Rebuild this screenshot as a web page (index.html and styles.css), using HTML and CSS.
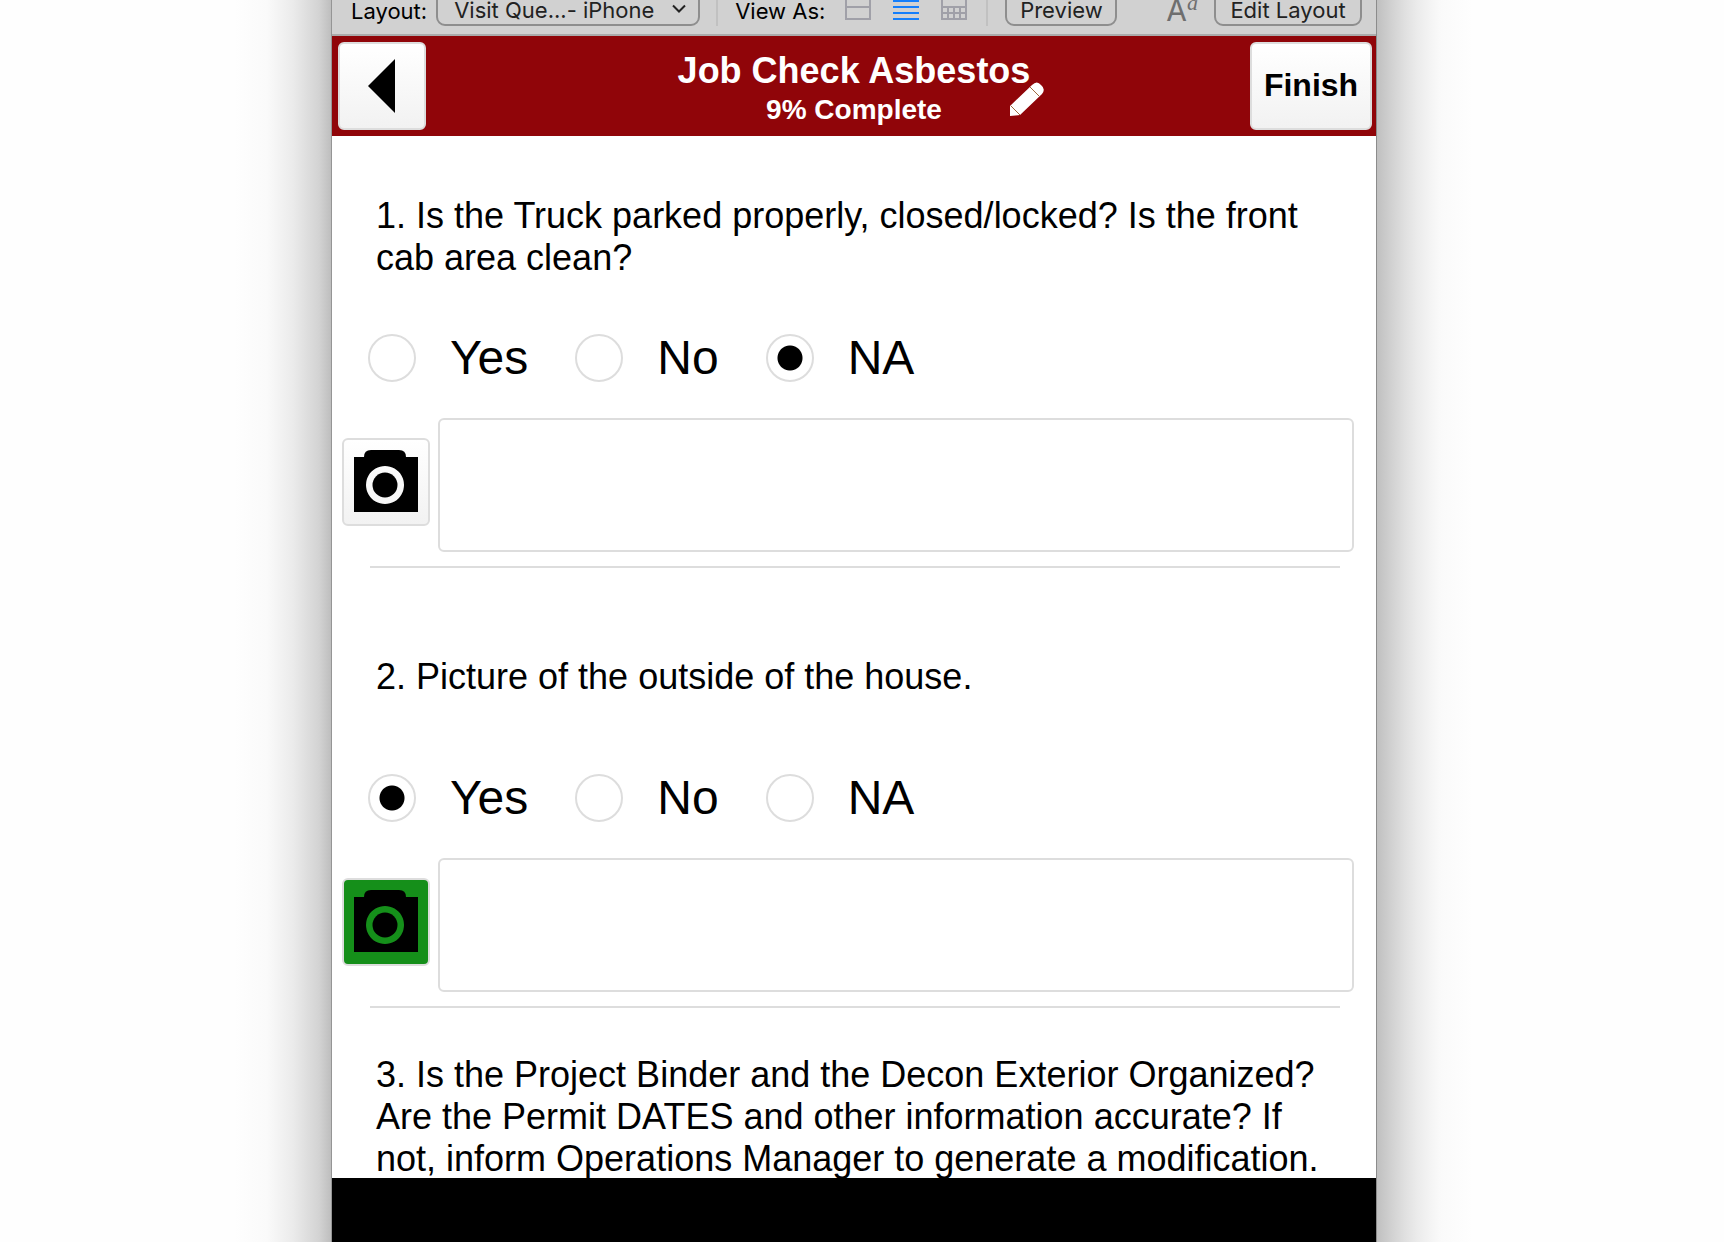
FILE: index.html
```html
<!DOCTYPE html>
<html lang="en">
<head>
<meta charset="utf-8">
<meta name="viewport" content="width=device-width, initial-scale=1">
<title>Job Check Asbestos</title>
<link rel="stylesheet" href="styles.css">
</head>
<body>
<div class="desk">
  <div class="shade shade-left"></div>
  <div class="window">
    <div class="toolbar">
      <label class="tool-label" for="layout">Layout:</label>
      <div class="select-wrap">
        <select id="layout" class="tool-control layout-select"><option>Visit Que...- iPhone</option></select>
        <svg class="chevron" width="16" height="10" viewBox="0 0 16 10" aria-hidden="true"><path d="M2 1.500l6 6 6-6" fill="none" stroke="#222" stroke-width="2"/></svg>
      </div>
      <span class="divider"></span>
      <span class="tool-label">View As:</span>
      <div class="views">
        <button class="icon-button" type="button" aria-label="Form view">
          <svg width="26" height="24" viewBox="0 0 26 24"><path d="M1 3h24v20H1zM1 11h24" fill="none" stroke="#a0a0a8" stroke-width="2"/></svg>
        </button>
        <button class="icon-button" type="button" aria-label="List view">
          <svg width="26" height="24" viewBox="0 0 26 24"><path d="M0 5h26M0 11h26M0 17h26M0 23h26" stroke="#147efb" stroke-width="2"/></svg>
        </button>
        <button class="icon-button" type="button" aria-label="Table view">
          <svg width="26" height="24" viewBox="0 0 26 24"><path d="M1 3h24v20H1zM1 11h24M1 17h24M7 11v12M13 11v12M19 11v12" fill="none" stroke="#a0a0a8" stroke-width="2"/></svg>
        </button>
      </div>
      <span class="divider"></span>
      <button class="tool-control preview" type="button">Preview</button>
      <button class="icon-button format" type="button" aria-label="Formatting"><span class="big-a">A</span><span class="small-a">a</span></button>
      <button class="tool-control edit" type="button">Edit Layout</button>
    </div>
    <header class="header">
      <button class="tile" type="button" aria-label="Back">
        <svg width="28" height="54" viewBox="0 0 28 54"><path d="M0 28L27 1v54z"/></svg>
      </button>
      <div class="heading">
        <h1 class="title">Job Check Asbestos</h1>
        <p class="progress">9% Complete</p>
        <button class="icon-button pencil" type="button" aria-label="Edit title">
          <svg width="34" height="34" viewBox="0 0 34 34"><path d="M22 3q5-5 9 0 5 4 1 9L10 33 0 34V24z" fill="#fff"/><path d="M20 5l9 9M1 24l9 9" fill="none" stroke="#a06a40" stroke-width="1"/></svg>
        </button>
      </div>
      <button class="tile finish" type="button">Finish</button>
    </header>
    <main class="questions">
      <fieldset class="question">
        <legend class="prompt">1. Is the Truck parked properly, closed/locked? Is the front cab area clean?</legend>
        <div class="options">
          <label class="option"><input type="radio" name="q1">Yes</label>
          <label class="option"><input type="radio" name="q1">No</label>
          <label class="option"><input type="radio" name="q1" checked>NA</label>
        </div>
        <div class="answer">
          <button class="tile camera" type="button" aria-label="Add photo">
            <svg width="64" height="64" viewBox="0 0 64 64"><path fill-rule="evenodd" d="M0 8h10q0-7 7-7h28q7 0 7 7h12v55H0zM31 17a19 19 0 1 0 .01 0z"/><circle cx="31" cy="36" r="12.500"/></svg>
          </button>
          <textarea class="notes" aria-label="Notes for question 1"></textarea>
        </div>
      </fieldset>
      <fieldset class="question">
        <legend class="prompt">2. Picture of the outside of the house.</legend>
        <div class="options">
          <label class="option"><input type="radio" name="q2" checked>Yes</label>
          <label class="option"><input type="radio" name="q2">No</label>
          <label class="option"><input type="radio" name="q2">NA</label>
        </div>
        <div class="answer">
          <button class="tile camera has-photo" type="button" aria-label="View photo">
            <svg width="64" height="64" viewBox="0 0 64 64"><path fill-rule="evenodd" d="M0 8h10q0-7 7-7h28q7 0 7 7h12v55H0zM31 17a19 19 0 1 0 .01 0z"/><circle cx="31" cy="36" r="12.500"/></svg>
          </button>
          <textarea class="notes" aria-label="Notes for question 2"></textarea>
        </div>
      </fieldset>
      <fieldset class="question">
        <legend class="prompt">3. Is the Project Binder and the Decon Exterior Organized? Are the Permit DATES and other information accurate? If not, inform Operations Manager to generate a modification.</legend>
      </fieldset>
    </main>
    <footer class="footer"></footer>
  </div>
  <div class="shade shade-right"></div>
</div>
</body>
</html>
```
FILE: styles.css
```css
* {
  box-sizing: border-box;
}

body {
  margin: 0;
  background: #fefefe;
  color: #000;
  font-family: "Liberation Sans", Arial, sans-serif;
}

button,
select,
textarea {
  font: inherit;
  color: inherit;
}

.desk {
  display: grid;
  grid-template-columns: 332fr 1044fr 348fr;
  height: 100vh;
}

.shade-left {
  border-right: 1px solid #959595;
  background: linear-gradient(to left, #bebebe 0, #d3d3d3 12px, #dedede 24px, #ebebeb 38px, #f3f3f3 52px, #fafafa 64px, #fcfcfc 80px, #fefefe 96px);
}

.shade-right {
  border-left: 1px solid #8c8c8c;
  background: linear-gradient(to right, #c0c0c0 0, #d3d3d3 16px, #e0e0e0 28px, #ebebeb 40px, #f3f3f3 52px, #fafafa 64px, #fcfcfc 80px, #fefefe 96px);
}

.window {
  display: flex;
  flex-direction: column;
  min-width: 0;
  min-height: 0;
  background: #fff;
}

/* The toolbar is scrolled partly above the top edge. */
.toolbar {
  display: flex;
  align-items: flex-end;
  flex: none;
  height: 36px;
  overflow: hidden;
  padding: 0 14px 8px 19px;
  border-bottom: 2px solid #ababab;
  background: #d1d1d1;
  font-family: Inter, "Liberation Sans", sans-serif;
  font-size: 22px;
  line-height: 32px;
}

.tool-label {
  flex: none;
  line-height: 30px;
  white-space: nowrap;
}

.tool-control {
  flex: none;
  height: 36px;
  padding: 4px 0 0;
  border: 2px solid #8e8e8e;
  border-radius: 9px;
  background: transparent;
  color: #222;
  line-height: 28px;
}

.select-wrap {
  position: relative;
  flex: none;
  width: 264px;
  height: 36px;
  margin-left: 9px;
}

.layout-select {
  width: 100%;
  padding: 4px 0 0 16px;
  appearance: none;
}

.chevron {
  position: absolute;
  right: 13px;
  bottom: 12px;
}

.divider {
  flex: none;
  width: 2px;
  height: 36px;
  margin: 0 17px 0 16px;
  background: #c1c1c1;
}

.views {
  display: flex;
  gap: 22px;
  margin: 0 3px 0 20px;
  padding-bottom: 6px;
}

.icon-button {
  display: flex;
  padding: 0;
  border: 0;
  background: none;
}

.preview {
  width: 112px;
}

.format {
  margin-left: auto;
  color: #6e6e6e;
  line-height: 32px;
}

.big-a {
  font-size: 30px;
}

.small-a {
  font-family: "Liberation Serif", serif;
  font-size: 22px;
  font-style: italic;
  line-height: 18px;
}

.edit {
  width: 148px;
  margin-left: 16px;
}

.header {
  display: flex;
  align-items: center;
  justify-content: space-between;
  flex: none;
  height: 100px;
  padding: 0 4px 0 6px;
  background: #900509;
}

.tile {
  display: flex;
  align-items: center;
  justify-content: center;
  flex: none;
  width: 88px;
  height: 88px;
  padding: 0 0 2px;
  border: 2px solid #ddd;
  border-radius: 6px;
  background: linear-gradient(#fff, #f2f2f2);
}

.tile svg {
  overflow: visible;
}

.finish {
  width: 122px;
  font-size: 32px;
  font-weight: 700;
}

.heading {
  position: relative;
  padding: 4px 0 0 32px;
  color: #fff;
  font-weight: 700;
  text-align: center;
}

.title {
  margin: 0;
  font-size: 36px;
  line-height: 44px;
}

.progress {
  margin: 0;
  font-size: 28px;
  line-height: 34px;
}

.pencil {
  position: absolute;
  right: -14px;
  bottom: 11px;
}

.questions {
  flex: 1;
  min-height: 0;
  overflow: hidden;
}

.question {
  position: relative;
  display: flex;
  flex-direction: column;
  height: 440px;
  margin: 0;
  padding: 0 22px 0 10px;
  border: 0;
}

.question::after {
  content: "";
  position: absolute;
  right: 36px;
  bottom: 8px;
  left: 38px;
  height: 2px;
  background: #ddd;
}

.prompt {
  display: flex;
  align-items: center;
  height: 198px;
  padding: 4px 24px 0 34px;
  font-size: 36px;
  line-height: 42px;
}

.options {
  display: flex;
  gap: 47px;
  height: 48px;
  margin-bottom: 36px;
  padding-left: 26px;
}

.option {
  display: flex;
  align-items: center;
  gap: 34px;
  font-size: 48px;
  line-height: 48px;
}

.option input {
  flex: none;
  width: 48px;
  height: 48px;
  margin: 0;
  border: 2px solid #ddd;
  border-radius: 50%;
  appearance: none;
}

.option input:checked {
  background: radial-gradient(circle, #000 12px, transparent 13px);
}

.answer {
  display: flex;
  gap: 8px;
}

.camera {
  margin-top: 20px;
}

.has-photo {
  background: #158f1a;
}

.notes {
  flex: 1;
  min-width: 0;
  height: 134px;
  border: 2px solid #ddd;
  border-radius: 6px;
  background: #fff;
  font-size: 36px;
  resize: none;
}

.footer {
  flex: none;
  height: 64px;
  background: #000;
}
```
